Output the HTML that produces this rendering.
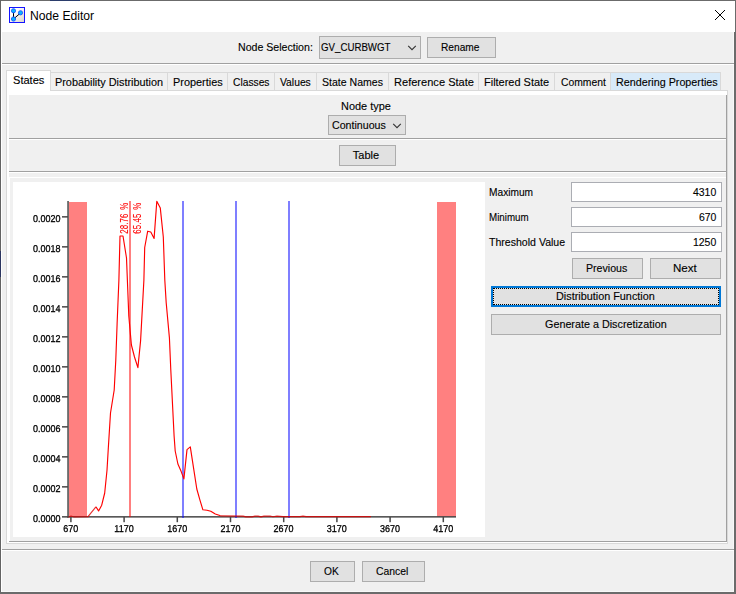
<!DOCTYPE html>
<html><head><meta charset="utf-8"><title>Node Editor</title>
<style>
html,body{margin:0;padding:0;}
body{width:736px;height:594px;overflow:hidden;background:#f0f0f0;position:relative;font-family:"Liberation Sans",sans-serif;font-size:11px;color:#000;}
.a{position:absolute;}
.t{position:absolute;white-space:nowrap;line-height:14px;height:14px;transform-origin:0 0;-webkit-text-stroke:0.12px #000;}
.btn{position:absolute;box-sizing:border-box;background:#e1e1e1;border:1px solid #adadad;}
.tf{position:absolute;box-sizing:border-box;background:#fff;border:1px solid #abadb3;}
.tab{position:absolute;box-sizing:border-box;top:72px;height:18px;border:1px solid #d9d9d9;border-left:none;border-bottom:none;background:#f0f0f0;}
.sep{position:absolute;height:1px;background:#a0a0a0;}
.sepw{position:absolute;height:1px;background:#fff;}
.ax{font-family:"Liberation Sans",sans-serif;font-size:10px;fill:#000;stroke:#000;stroke-width:0.3px;}
</style></head><body>
<!-- window frame -->
<div class="a" style="left:0;top:0;width:736px;height:32px;background:#fff;"></div>
<div class="a" style="left:1px;top:32px;width:1px;height:560px;background:#fff;"></div>
<div class="a" style="left:733px;top:32px;width:1px;height:560px;background:#f8f8f8;"></div>
<div class="a" style="left:2px;top:591px;width:732px;height:1px;background:#f8f8f8;"></div>
<div class="a" style="left:0;top:0;width:736px;height:1px;background:#6b6b6b;"></div>
<div class="a" style="left:0;top:0;width:1px;height:594px;background:#636363;"></div>
<div class="a" style="left:735px;top:0;width:1px;height:594px;background:#6b6b6b;"></div>
<div class="a" style="left:734px;top:32px;width:1px;height:562px;background:#6b6b6b;"></div>
<div class="a" style="left:0;top:592px;width:736px;height:2px;background:#6b6b6b;"></div>
<div class="a" style="left:50px;top:0;width:30px;height:1px;background:#2b3d6b;"></div>
<div class="a" style="left:0;top:251px;width:1px;height:26px;background:#2b3560;"></div>
<!-- title icon -->
<svg class="a" style="left:9px;top:7px;" width="16" height="16" viewBox="0 0 16 16">
<defs><linearGradient id="ig" x1="0.3" y1="0.3" x2="1" y2="1"><stop offset="0" stop-color="#fff"/><stop offset="1" stop-color="#d8d4c8"/></linearGradient></defs>
<rect x="0.5" y="0.5" width="15" height="15" fill="url(#ig)" stroke="#1414ff"/>
<path d="M4.5 4 L4.5 12 L11.5 6" fill="none" stroke="#000" stroke-width="1"/>
<circle cx="4.5" cy="3.8" r="2.1" fill="#0ab4ff" stroke="#1455ff" stroke-width="0.9"/>
<circle cx="11.5" cy="5.8" r="2.1" fill="#0ab4ff" stroke="#1455ff" stroke-width="0.9"/>
<circle cx="4.5" cy="12" r="2.1" fill="#0ab4ff" stroke="#1455ff" stroke-width="0.9"/>
</svg>
<div class="t" id="title" style="-webkit-text-stroke:0;left:29.5px;top:8px;font-size:12px;line-height:16px;height:16px;transform:scaleX(1.012);">Node Editor</div>
<svg class="a" style="left:714px;top:9px;" width="12" height="12" viewBox="0 0 12 12"><path d="M1 1 L11 11 M11 1 L1 11" stroke="#000" stroke-width="1" fill="none"/></svg>

<div class="t" style="left:238.1px;top:40px;transform:scaleX(0.964);">Node Selection:</div>
<div class="btn" style="left:319px;top:36px;width:102px;height:23px;"></div>
<div class="t" style="left:320.9px;top:40px;transform:scaleX(0.881);">GV_CURBWGT</div>
<svg class="a" style="left:407px;top:45px;" width="10" height="6" viewBox="0 0 10 6"><path d="M1.2 0.8 L5 4.6 L8.8 0.8" fill="none" stroke="#333" stroke-width="1.1"/></svg>
<div class="btn" style="left:427px;top:37px;width:69px;height:21px;"></div>
<div class="t" style="left:441.3px;top:40px;transform:scaleX(0.924);">Rename</div>
<div class="sep" style="left:2px;top:63px;width:732px;"></div><div class="sepw" style="left:2px;top:64px;width:732px;"></div>
<div class="a" style="left:6px;top:90px;width:722px;height:454px;box-sizing:border-box;background:#fff;border:1px solid #d9d9d9;"></div>
<div class="a" style="left:9px;top:95px;width:718px;height:447px;background:#f0f0f0;"></div>
<div class="tab" style="left:51px;width:117px;"></div>
<div class="t" style="left:55.0px;top:75px;transform:scaleX(0.988);">Probability Distribution</div>
<div class="tab" style="left:168px;width:60px;"></div>
<div class="t" style="left:172.5px;top:75px;transform:scaleX(0.990);">Properties</div>
<div class="tab" style="left:228px;width:47px;"></div>
<div class="t" style="left:233.1px;top:75px;transform:scaleX(0.932);">Classes</div>
<div class="tab" style="left:275px;width:42px;"></div>
<div class="t" style="left:280.4px;top:75px;transform:scaleX(0.938);">Values</div>
<div class="tab" style="left:317px;width:72px;"></div>
<div class="t" style="left:322.2px;top:75px;transform:scaleX(0.959);">State Names</div>
<div class="tab" style="left:389px;width:90px;"></div>
<div class="t" style="left:393.5px;top:75px;transform:scaleX(1.006);">Reference State</div>
<div class="tab" style="left:479px;width:76px;"></div>
<div class="t" style="left:484.1px;top:75px;transform:scaleX(0.997);">Filtered State</div>
<div class="tab" style="left:555px;width:56px;"></div>
<div class="t" style="left:560.5px;top:75px;transform:scaleX(0.940);">Comment</div>
<div class="tab" style="left:611px;width:110px;background:#d8eaf9;"></div>
<div class="t" style="left:616.2px;top:75px;transform:scaleX(0.978);">Rendering Properties</div>
<div class="a" style="left:6px;top:70px;width:45px;height:21px;box-sizing:border-box;background:#fff;border:1px solid #d9d9d9;border-bottom:none;"></div>
<div class="t" style="left:13.0px;top:73px;transform:scaleX(1.006);">States</div>
<div class="t" style="left:341.2px;top:99px;transform:scaleX(0.994);">Node type</div>
<div class="btn" style="left:328px;top:115px;width:78px;height:20px;"></div>
<div class="t" style="left:331.5px;top:118px;transform:scaleX(0.967);">Continuous</div>
<svg class="a" style="left:392px;top:123px;" width="10" height="6" viewBox="0 0 10 6"><path d="M1.2 0.8 L5 4.6 L8.8 0.8" fill="none" stroke="#333" stroke-width="1.1"/></svg>
<div class="sep" style="left:9px;top:138px;width:717px;"></div><div class="sepw" style="left:9px;top:139px;width:717px;"></div>
<div class="btn" style="left:339px;top:145px;width:57px;height:21px;"></div>
<div class="t" style="left:352.8px;top:148px;transform:scaleX(1.000);">Table</div>
<div class="sep" style="left:9px;top:171px;width:717px;"></div><div class="sepw" style="left:9px;top:172px;width:717px;"></div>
<div class="a" style="left:726px;top:95px;width:1px;height:447px;background:#a0a0a0;"></div>
<div class="a" style="left:9px;top:177px;width:717px;height:1px;background:#fff;"></div>
<div class="a" style="left:9px;top:177px;width:1px;height:364px;background:#fff;"></div>
<div class="a" style="left:9px;top:541px;width:718px;height:1px;background:#a0a0a0;"></div>
<svg class="a" style="left:13px;top:182px;will-change:transform;" width="472" height="355" viewBox="13 182 472 355">
<rect x="13" y="182" width="472" height="355" fill="#fff"/>
<g shape-rendering="crispEdges">
<rect x="69" y="202" width="18" height="315" fill="#ff8080"/>
<rect x="437" y="202" width="19" height="315" fill="#ff8080"/>
</g>
<rect x="67.3" y="201" width="1.5" height="316.6" fill="#484848"/>
<rect x="67.3" y="516.1" width="388.7" height="1.5" fill="#484848"/>
<rect x="62" y="516.1" width="6" height="1.5" fill="#484848"/>
<rect x="62" y="486.1" width="6" height="1.5" fill="#484848"/>
<rect x="62" y="456.1" width="6" height="1.5" fill="#484848"/>
<rect x="62" y="426.1" width="6" height="1.5" fill="#484848"/>
<rect x="62" y="396.1" width="6" height="1.5" fill="#484848"/>
<rect x="62" y="366.1" width="6" height="1.5" fill="#484848"/>
<rect x="62" y="336.1" width="6" height="1.5" fill="#484848"/>
<rect x="62" y="306.1" width="6" height="1.5" fill="#484848"/>
<rect x="62" y="276.1" width="6" height="1.5" fill="#484848"/>
<rect x="62" y="246.1" width="6" height="1.5" fill="#484848"/>
<rect x="62" y="216.1" width="6" height="1.5" fill="#484848"/>
<rect x="70.15" y="517" width="1.5" height="5.2" fill="#484848"/>
<rect x="123.35" y="517" width="1.5" height="5.2" fill="#484848"/>
<rect x="176.55" y="517" width="1.5" height="5.2" fill="#484848"/>
<rect x="229.75" y="517" width="1.5" height="5.2" fill="#484848"/>
<rect x="282.95" y="517" width="1.5" height="5.2" fill="#484848"/>
<rect x="336.15" y="517" width="1.5" height="5.2" fill="#484848"/>
<rect x="389.35" y="517" width="1.5" height="5.2" fill="#484848"/>
<rect x="442.55" y="517" width="1.5" height="5.2" fill="#484848"/>
<rect x="182" y="201" width="2" height="316.5" fill="#0000ff" fill-opacity="0.5" shape-rendering="crispEdges"/>
<rect x="235" y="201" width="2" height="316.5" fill="#0000ff" fill-opacity="0.5" shape-rendering="crispEdges"/>
<rect x="288" y="201" width="2" height="316.5" fill="#0000ff" fill-opacity="0.5" shape-rendering="crispEdges"/>
<rect x="129" y="201" width="2" height="316" fill="#ff0000" fill-opacity="0.5" shape-rendering="crispEdges"/>
<polyline fill="none" stroke="#e00000" stroke-opacity="0.8" stroke-width="1.2" stroke-linejoin="round" points="68.5,517.25 71,516.05 74,516.95 88,516.65 95.9,506.95"/>
<polyline fill="none" stroke="#ff0000" stroke-width="1.15" stroke-linejoin="round" points="95.9,506.7 98.6,510.9 101.7,505.2 104.7,493 107,470.3 108.2,450 110.5,413 114.2,390 115.8,360 117.1,324 118.9,280 120,236 123,236 126.5,258 128.8,316 131.4,345 134.5,357 137.9,367.6 140.6,340.6 143.9,280 144.7,247.5 147.7,231.2 150.8,232 154.1,238.4 156.8,201.3 160.3,208.1 163.3,237 164.8,280 166.2,302.7 169.4,337.6 170.8,370 174.1,436 175.2,451 177.9,464 181.2,471.6 183.9,478.9 187,449.6 190.3,446.9 193.3,466.3 196.8,489 199.8,499.6 202.9,509.8 207,510.2 210.8,511.3 215.3,514 220.6,515.7"/>
<polyline fill="none" stroke="#e00000" stroke-opacity="0.8" stroke-width="1.2" stroke-linejoin="round" points="220.6,515.95 243,516.05 246,516.85 252,516.85 255,516.05 258,516.05 261,516.85 264,516.05 270,516.05 273,516.75 277,516.05 283,516.55 300,516.65 303,516.05 306,516.65 371,516.65"/>
<text class="ax" transform="translate(60.5,522) rotate(0.05) scale(0.9,1)" text-anchor="end">0.0000</text>
<text class="ax" transform="translate(60.5,492) rotate(0.05) scale(0.9,1)" text-anchor="end">0.0002</text>
<text class="ax" transform="translate(60.5,462) rotate(0.05) scale(0.9,1)" text-anchor="end">0.0004</text>
<text class="ax" transform="translate(60.5,432) rotate(0.05) scale(0.9,1)" text-anchor="end">0.0006</text>
<text class="ax" transform="translate(60.5,402) rotate(0.05) scale(0.9,1)" text-anchor="end">0.0008</text>
<text class="ax" transform="translate(60.5,372) rotate(0.05) scale(0.9,1)" text-anchor="end">0.0010</text>
<text class="ax" transform="translate(60.5,342) rotate(0.05) scale(0.9,1)" text-anchor="end">0.0012</text>
<text class="ax" transform="translate(60.5,312) rotate(0.05) scale(0.9,1)" text-anchor="end">0.0014</text>
<text class="ax" transform="translate(60.5,282) rotate(0.05) scale(0.9,1)" text-anchor="end">0.0016</text>
<text class="ax" transform="translate(60.5,252) rotate(0.05) scale(0.9,1)" text-anchor="end">0.0018</text>
<text class="ax" transform="translate(60.5,222) rotate(0.05) scale(0.9,1)" text-anchor="end">0.0020</text>
<text class="ax" transform="translate(70.8,532) rotate(0.05) scale(0.9,1)" text-anchor="middle">670</text>
<text class="ax" transform="translate(124.0,532) rotate(0.05) scale(0.9,1)" text-anchor="middle">1170</text>
<text class="ax" transform="translate(177.2,532) rotate(0.05) scale(0.9,1)" text-anchor="middle">1670</text>
<text class="ax" transform="translate(230.4,532) rotate(0.05) scale(0.9,1)" text-anchor="middle">2170</text>
<text class="ax" transform="translate(283.6,532) rotate(0.05) scale(0.9,1)" text-anchor="middle">2670</text>
<text class="ax" transform="translate(336.8,532) rotate(0.05) scale(0.9,1)" text-anchor="middle">3170</text>
<text class="ax" transform="translate(390.0,532) rotate(0.05) scale(0.9,1)" text-anchor="middle">3670</text>
<text class="ax" transform="translate(443.2,532) rotate(0.05) scale(0.9,1)" text-anchor="middle">4170</text>
<text class="ax" style="fill:#ff0000;stroke:#ff0000;stroke-width:0.1px;font-size:10px;letter-spacing:0.2px;word-spacing:1.6px" transform="translate(128.0,233.8) rotate(-90) scale(0.785,1)">28.76 %</text>
<text class="ax" style="fill:#ff0000;stroke:#ff0000;stroke-width:0.1px;font-size:10px;letter-spacing:0.2px;word-spacing:1.6px" transform="translate(141.0,233.8) rotate(-90) scale(0.785,1)">65.45 %</text>
</svg>
<div class="t" style="left:489.3px;top:185px;transform:scaleX(0.925);">Maximum</div>
<div class="tf" style="left:571px;top:182px;width:151px;height:20px;"></div>
<div class="t" style="left:692.9px;top:185px;transform:scaleX(0.950);">4310</div>
<div class="t" style="left:489.3px;top:210px;transform:scaleX(0.889);">Minimum</div>
<div class="tf" style="left:571px;top:207px;width:151px;height:20px;"></div>
<div class="t" style="left:698.7px;top:210px;transform:scaleX(0.949);">670</div>
<div class="t" style="left:489.3px;top:235px;transform:scaleX(0.960);">Threshold Value</div>
<div class="tf" style="left:571px;top:232px;width:151px;height:20px;"></div>
<div class="t" style="left:692.9px;top:235px;transform:scaleX(0.950);">1250</div>
<div class="btn" style="left:572px;top:258px;width:71px;height:21px;"></div>
<div class="t" style="left:585.9px;top:261px;transform:scaleX(0.965);">Previous</div>
<div class="btn" style="left:650px;top:258px;width:71px;height:21px;"></div>
<div class="t" style="left:673.0px;top:261px;transform:scaleX(1.052);">Next</div>
<div class="btn" style="left:491px;top:286px;width:230px;height:21px;border:2px solid #0078d7;"><div style="position:absolute;left:0;top:0;right:0;bottom:0;border:1px dotted #000;"></div></div>
<div class="t" style="left:555.9px;top:289px;transform:scaleX(0.985);">Distribution Function</div>
<div class="btn" style="left:491px;top:314px;width:230px;height:21px;"></div>
<div class="t" style="left:545.3px;top:317px;transform:scaleX(0.980);">Generate a Discretization</div>
<div class="sep" style="left:2px;top:549px;width:732px;"></div><div class="sepw" style="left:2px;top:550px;width:732px;"></div>
<div class="btn" style="left:310px;top:561px;width:45px;height:21px;"></div>
<div class="t" style="left:323.8px;top:564px;transform:scaleX(0.929);">OK</div>
<div class="btn" style="left:362px;top:561px;width:63px;height:21px;"></div>
<div class="t" style="left:376.0px;top:564px;transform:scaleX(0.947);">Cancel</div>
</body></html>
